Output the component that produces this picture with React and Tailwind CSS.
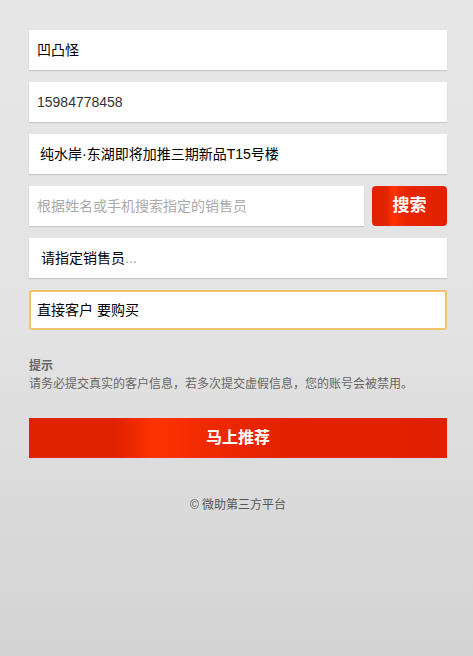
export default function App() {
  const font = "font-['Liberation_Sans','Noto_Sans_CJK_SC',sans-serif]";
  const field = "h-10 bg-white shadow-[0_1px_1px_rgba(0,0,0,0.12)] flex items-center text-[14px]";
  return (
    <div className={`${font} min-h-[656px] w-full bg-[linear-gradient(180deg,#e6e6e6_0%,#e3e3e3_50%,#d3d3d3_100%)] px-[29px] pt-[30px]`}>
      <div className="flex flex-col gap-3 w-[418px]">
        <div className={`${field} pl-2 text-black`}>凹凸怪</div>
        <div className={`${field} pl-2 text-[#333]`}>15984778458</div>
        <div className={`${field} pl-[11px] text-black`}>纯水岸·东湖即将加推三期新品T15号楼</div>
        <div className="flex gap-2">
          <div className={`${field} pl-2 flex-1 text-[#aaa]`}>根据姓名或手机搜索指定的销售员</div>
          <div className="w-[75px] h-10 rounded-[4px] bg-[linear-gradient(90deg,#e02200_0%,#e22400_20%,#ff3300_28%,#e82600_45%,#e02000_100%)] flex items-center justify-center text-white font-bold text-[17px]">搜索</div>
        </div>
        <div className={`${field} pl-3 text-black`}>请指定销售员<span className="text-[#999]">...</span></div>
        <div className="h-10 bg-white border-2 border-[#f0c36d] rounded-[3px] flex items-center pl-[6px] text-[14px] text-black">直接客户 要购买</div>
      </div>
      <div className="mt-[27px] text-[#666]">
        <div className="text-[12px] font-bold leading-[18px]">提示</div>
        <div className="text-[12px] leading-[18px]">请务必提交真实的客户信息，若多次提交虚假信息，您的账号会被禁用。</div>
      </div>
      <div className="mt-[25px] w-[418px] h-10 bg-[linear-gradient(90deg,#e02200_0%,#e12200_21%,#ff3300_30%,#f02a00_42%,#e42200_60%,#e02000_100%)] flex items-center justify-center text-white font-bold text-[16px]">马上推荐</div>
      <div className="mt-[38px] w-[418px] text-center text-[12px] text-[#555]">© 微助第三方平台</div>
    </div>
  );
}
